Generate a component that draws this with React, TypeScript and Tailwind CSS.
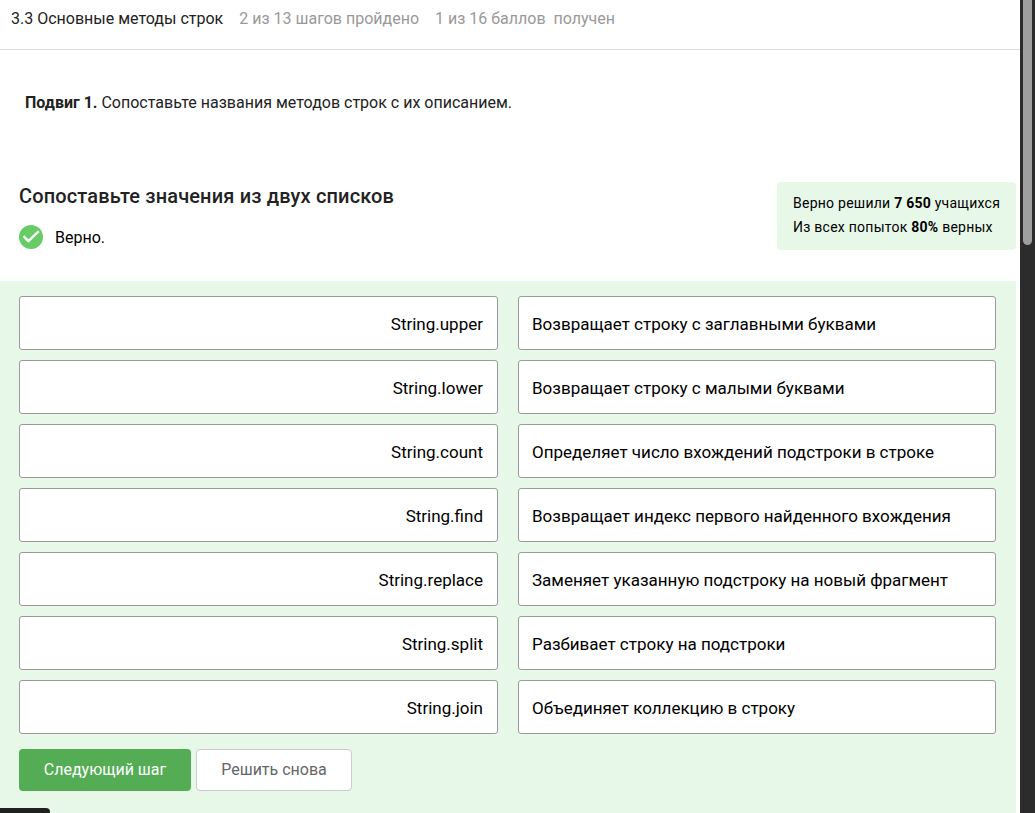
const pairs = [
  ['String.upper', 'Возвращает строку с заглавными буквами'],
  ['String.lower', 'Возвращает строку с малыми буквами'],
  ['String.count', 'Определяет число вхождений подстроки в строке'],
  ['String.find', 'Возвращает индекс первого найденного вхождения'],
  ['String.replace', 'Заменяет указанную подстроку на новый фрагмент'],
  ['String.split', 'Разбивает строку на подстроки'],
  ['String.join', 'Объединяет коллекцию в строку'],
];

function Header() {
  return (
    <header className="flex h-[50px] shrink-0 gap-4 border-b border-[#dddddd] pl-[11px] pt-[7px] leading-6 text-[#999999]">
      <span className="text-[#222222]">3.3 Основные методы строк</span>
      <span>2 из 13 шагов пройдено</span>
      <span className="whitespace-pre">1 из 16 баллов  получен</span>
    </header>
  );
}

function Stats() {
  return (
    <div className="mt-[1px] h-[68px] w-[239px] rounded bg-[#e7f8e9] pl-4 pt-[9px] text-sm leading-6 tracking-[0.25px] whitespace-nowrap text-black">
      <p>Верно решили <b>7 650</b> учащихся</p>
      <p>Из всех попыток <b>80%</b> верных</p>
    </div>
  );
}

function Matching() {
  return (
    <main className="mr-1 flex-1 bg-[#e7f8e9] pl-[19px] pr-5 pt-[15px]">
      <div className="flex flex-col gap-[10px]">
        {pairs.map(([name, description]) => (
          <div key={name} className="flex gap-5 text-[17px] leading-6 text-black">
            <div className="flex h-[54px] w-[479px] items-center justify-end rounded-[3px] border border-[#9b9b9b] bg-white pr-[14px] pt-[2px]">{name}</div>
            <div className="flex h-[54px] w-[478px] items-center rounded-[3px] border border-[#9b9b9b] bg-white pl-[13px] pt-[2px]">{description}</div>
          </div>
        ))}
      </div>
      <div className="mt-[15px] flex gap-[5px]">
        <button className="h-[42px] w-[172px] rounded bg-[#54ad54] text-base text-white">Следующий шаг</button>
        <button className="h-[42px] w-[156px] rounded border border-[#cccccc] bg-white text-base text-[#666666]">Решить снова</button>
      </div>
    </main>
  );
}

export default function App() {
  return (
    <div className="relative flex h-[813px] w-[1035px] overflow-hidden bg-white font-['Roboto',sans-serif] text-base text-[#222222]">
      <div className="flex w-[1020px] flex-col">
        <Header />
        <p className="mt-[41px] pl-[25px] leading-6"><b>Подвиг 1.</b> Сопоставьте названия методов строк с их описанием.</p>
        <section className="mt-[66px] mr-1 flex h-[100px] justify-between pl-[19px]">
          <div>
            <h2 className="text-xl leading-[30px] font-medium tracking-[0.15px]">Сопоставьте значения из двух списков</h2>
            <div className="mt-[13px] flex items-center gap-3 text-black">
              <svg className="size-6" viewBox="0 0 24 24" fill="none">
                <circle cx="12" cy="12" r="12" fill="#66cc66" />
                <path d="M4.5 11.1L9.4 16L19.8 6.2" stroke="white" strokeWidth="2.4" />
              </svg>
              <span className="pt-[2px] leading-6">Верно.</span>
            </div>
          </div>
          <Stats />
        </section>
        <Matching />
      </div>
      <div className="flex w-[15px] justify-center bg-[#2c2c2c]">
        <div className="h-[245px] w-[9px] rounded-b-full bg-[#9f9f9f]" />
      </div>
      <div className="absolute bottom-0 left-0 h-[5px] w-[50px] rounded-tr bg-[#202020]" />
    </div>
  );
}
